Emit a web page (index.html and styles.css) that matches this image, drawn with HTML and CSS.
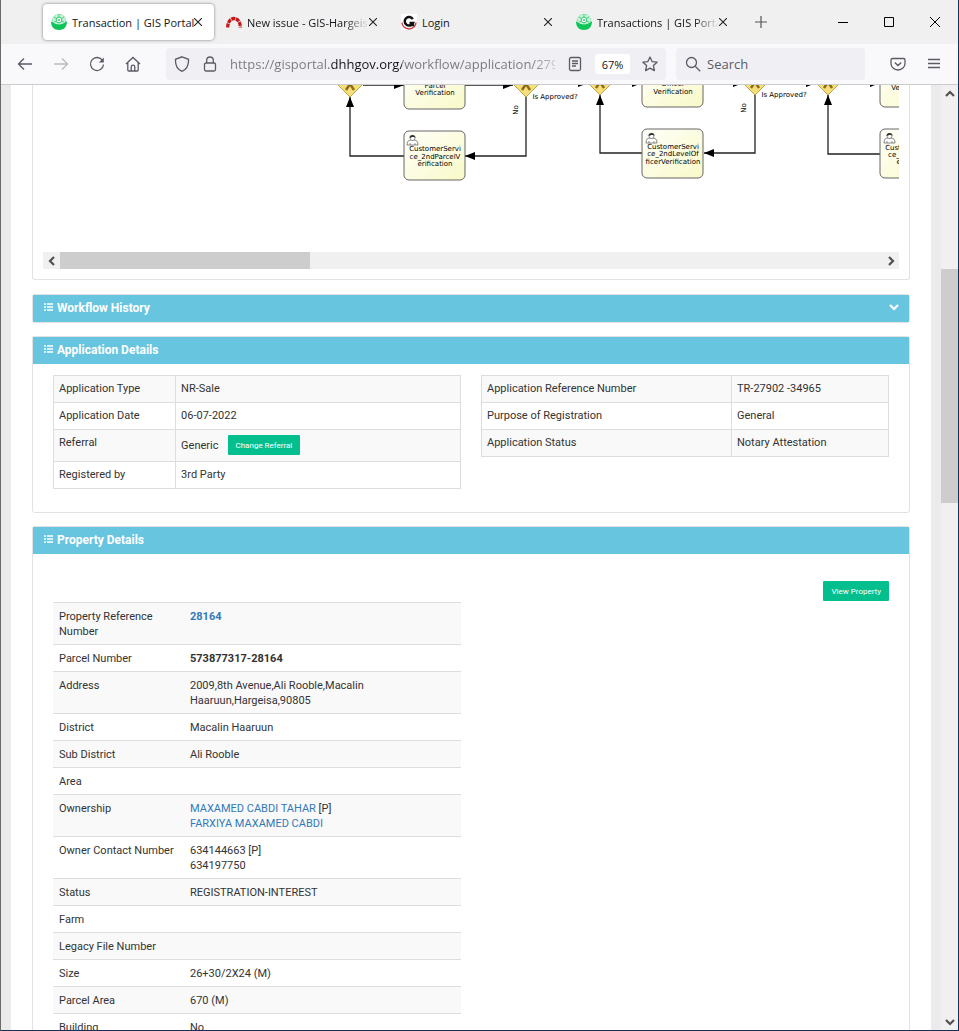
FILE: index.html
```html
<!DOCTYPE html>
<html lang="en">

<head>
    <meta charset="UTF-8">
    <meta name="viewport" content="width=device-width, initial-scale=1.0">
    <title>Transaction | GIS Portal</title>
    <link rel="stylesheet" href="styles.css">
</head>

<body>
    <svg class="defs" width="0" height="0" aria-hidden="true">
        <symbol id="logo" viewBox="0 0 16 16">
            <circle cx="8" cy="7" r="6.800" fill="#c4f0d5" stroke="#7fdfa5" stroke-dasharray="2 1" />
            <path d="M0 7.500c2 0 3 3 8 3s6-3 8-3c0 5-3 8.500-8 8.500S0 12.500 0 7.500z" fill="#0fc458" />
            <path d="M3 3l3 2M13 3l-3 2M8 0v3M3 8l3-1M13 8l-3-1" stroke="#4fd383" />
            <circle cx="8" cy="6" r="2.800" fill="#fff" stroke="#2ecc71" />
            <circle cx="8" cy="6" r="1" fill="#2ecc71" />
        </symbol>
        <symbol id="x" viewBox="0 0 8 8">
            <path d="M0 0l8 8M8 0L0 8" fill="none" stroke="#222" stroke-width="1.100" />
        </symbol>
        <symbol id="list" viewBox="0 0 9 8">
            <path d="M0 1h2M0 4h2M0 7h2M3 1h6M3 4h6M3 7h6" stroke="#fff" stroke-width="1.500" />
        </symbol>
        <symbol id="chevron" viewBox="0 0 10 10">
            <path d="M1 3l4 4 4-4" fill="none" stroke="currentColor" stroke-width="2.200" />
        </symbol>
    </svg>

    <div class="tabs" role="tablist">
        <div class="tab active" role="tab" aria-selected="true">
            <svg class="favicon"><use href="#logo" /></svg>
            <span class="tab-title">Transaction | GIS Portal</span>
            <button class="close" aria-label="Close tab"><svg><use href="#x" /></svg></button>
        </div>
        <div class="tab" role="tab">
            <svg class="favicon" viewBox="0 0 16 16">
                <path d="M1.700 13.500C1.700 1.500 14.300 1.500 14.300 13.500" fill="none" stroke="#c61a1a" stroke-width="3.300" stroke-dasharray="4 0.700" />
            </svg>
            <span class="tab-title fade">New issue - GIS-Hargeisa</span>
            <button class="close" aria-label="Close tab"><svg><use href="#x" /></svg></button>
        </div>
        <div class="tab" role="tab">
            <svg class="favicon" viewBox="0 0 16 16">
                <rect width="16" height="16" fill="#fff" />
                <path d="M1 8.500a7 6.500 0 0 0 14 0" fill="none" stroke="#d8343a" stroke-width="1.300" />
                <path d="M11.800 5.200A4.300 4.300 0 1 0 12 9H8.500M12 7.800v4.500" fill="none" stroke="#111" stroke-width="2.500" />
            </svg>
            <span class="tab-title">Login</span>
            <button class="close" aria-label="Close tab"><svg><use href="#x" /></svg></button>
        </div>
        <div class="tab" role="tab">
            <svg class="favicon"><use href="#logo" /></svg>
            <span class="tab-title fade">Transactions | GIS Portal</span>
            <button class="close" aria-label="Close tab"><svg><use href="#x" /></svg></button>
        </div>
        <button class="new-tab" aria-label="New tab">
            <svg viewBox="0 0 12 12"><path d="M6 0v12M0 6h12" stroke="#555" stroke-width="1.200" /></svg>
        </button>
        <div class="window-controls">
            <button aria-label="Minimize"><svg viewBox="0 0 10 10"><path d="M0 5.500h10" stroke="#000" /></svg></button>
            <button aria-label="Maximize"><svg viewBox="0 0 10 10"><path d="M.5.5h9v9h-9z" fill="none" stroke="#000" /></svg></button>
            <button aria-label="Close"><svg viewBox="0 0 10 10"><path d="M0 0l10 10M10 0L0 10" stroke="#000" /></svg></button>
        </div>
    </div>

    <div class="toolbar">
        <div class="nav-buttons">
            <button aria-label="Back"><svg viewBox="0 0 16 16"><path d="M15 8H1.500M7 2.500L1.500 8 7 13.500" /></svg></button>
            <button aria-label="Forward" disabled><svg viewBox="0 0 16 16"><path d="M1 8h13.500M9 2.500L14.500 8 9 13.500" /></svg></button>
            <button aria-label="Reload"><svg viewBox="0 0 16 16"><path d="M13.500 4.500A6.500 6.500 0 1 0 14.500 8.500" /><path d="M14.800 1.500v5h-5z" fill="#5b5b66" stroke="none" /></svg></button>
            <button aria-label="Home"><svg viewBox="0 0 16 16"><path d="M1 8l7-6.500L15 8M2.800 6.500V14q0 1 1 1h8.400q1 0 1-1V6.500M6.200 15v-4q0-1.800 1.800-1.800t1.800 1.800v4" /></svg></button>
        </div>
        <div class="url-bar">
            <svg viewBox="0 0 16 16"><path d="M8 .8l6.500 2.500C14.800 9 12.500 13.500 8 15.300 3.500 13.500 1.200 9 1.500 3.300z" /></svg>
            <svg viewBox="0 0 16 16"><rect x="2.500" y="7" width="11" height="8" rx="1.500" /><path d="M4.700 7V4.300a3.300 3.300 0 0 1 6.600 0V7" /></svg>
            <input class="url" type="text" aria-label="Address" value="https://gisportal.dhhgov.org/workflow/application/279">
            <svg viewBox="0 0 16 16"><rect x="2.500" y="1.500" width="11" height="13" rx="1.500" /><path d="M5 5h6M5 7.500h6M5 10h4" /></svg>
            <button class="zoom">67%</button>
            <svg viewBox="0 0 16 16"><path d="M8 1l2.100 4.600 5 .6-3.700 3.400 1 5L8 12.100l-4.400 2.500 1-5L.9 6.200l5-.6z" stroke-linejoin="round" /></svg>
        </div>
        <div class="search-bar">
            <svg viewBox="0 0 16 16"><circle cx="6.500" cy="6.500" r="5" /><path d="M10.200 10.200l5 5" /></svg>
            <input type="search" aria-label="Search" placeholder="Search">
        </div>
        <div class="menu-buttons">
            <button aria-label="Save to Pocket"><svg viewBox="0 0 16 16"><path d="M2.500 2.500h11q1.500 0 1.500 1.500v3.500a7 6.500 0 0 1-14 0V4q0-1.500 1.500-1.500zM4.800 6.500L8 9.500l3.200-3" /></svg></button>
            <button aria-label="Menu"><svg viewBox="0 0 16 16"><path d="M2 3.500h12M2 7.500h12M2 11.500h12" /></svg></button>
        </div>
    </div>

    <div class="viewport">
        <main class="page">
            <section class="panel diagram-panel">
                <div class="diagram">
                    <svg width="856" height="167" viewBox="43 85 856 167">
                        <defs>
                            <linearGradient id="task-fill" x1="0" y1="0" x2="1" y2="1">
                                <stop offset="0" stop-color="#fffffb" />
                                <stop offset="1" stop-color="#f9f9c8" />
                            </linearGradient>
                            <marker id="arrow" viewBox="0 0 10 8" refX="10" refY="4" markerWidth="10" markerHeight="8" markerUnits="userSpaceOnUse" orient="auto">
                                <path d="M0 0l10 4-10 4z" />
                            </marker>
                            <g id="gateway">
                                <path d="M0-13L13 0 0 13-13 0z" fill="#f6df79" stroke="#b9a44c" />
                                <path d="M-4 6L0 0l4 6" fill="none" stroke="#8a6d1c" stroke-width="2.500" />
                            </g>
                            <g id="user">
                                <path d="M0 11c0-3 1-5 4-5h3c3 0 4 2 4 5z" fill="#fff" stroke="#555" stroke-width=".7" />
                                <path d="M3 11V9M8 11V9" stroke="#555" stroke-width=".6" />
                                <circle cx="5.500" cy="4" r="2.500" fill="#fff" stroke="#555" stroke-width=".6" />
                                <path d="M2.500 4C2 0 9 0 8.500 4 7 2 4 3.500 2.500 4z" fill="#333" />
                            </g>
                        </defs>

                        <g class="flow">
                            <path d="M363 85H404" />
                            <path d="M465 85H513" />
                            <path d="M539 83H588" />
                            <path d="M526 97V156H465" />
                            <path d="M404 156H350V97" />
                            <path d="M612 83H642" />
                            <path d="M704 83H743" />
                            <path d="M768 83H816" />
                            <path d="M755 95V153H704" />
                            <path d="M642 153H600V95" />
                            <path d="M841 83H880" />
                            <path d="M880 154H828V95" />
                        </g>

                        <g class="task">
                            <rect x="404" y="60" width="61" height="49" rx="5" />
                            <rect x="404" y="131" width="61" height="49" rx="5" />
                            <rect x="642" y="58" width="61" height="49" rx="5" />
                            <rect x="642" y="129" width="61" height="49" rx="5" />
                            <rect x="880" y="58" width="61" height="49" rx="5" />
                            <rect x="880" y="129" width="61" height="49" rx="5" />
                        </g>

                        <use href="#gateway" x="350" y="84" />
                        <use href="#gateway" x="526" y="84" />
                        <use href="#gateway" x="600" y="82" />
                        <use href="#gateway" x="755" y="82" />
                        <use href="#gateway" x="828" y="82" />
                        <use href="#user" x="407" y="134" />
                        <use href="#user" x="646" y="132" />
                        <use href="#user" x="884" y="132" />

                        <g class="label">
                            <text x="435" y="88">Parcel</text>
                            <text x="435" y="95">Verification</text>
                            <text x="435" y="151">CustomerServi</text>
                            <text x="435" y="159">ce_2ndParcelV</text>
                            <text x="435" y="166">erification</text>
                            <text x="673" y="86">Officer</text>
                            <text x="673" y="94">Verification</text>
                            <text x="673" y="149">CustomerServi</text>
                            <text x="673" y="156">ce_2ndLevelOf</text>
                            <text x="673" y="164">ficerVerification</text>
                            <text x="911" y="90">Verification</text>
                            <text x="911" y="150">CustomerServi</text>
                            <text x="911" y="157">ce_ChiefOffic</text>
                            <text x="911" y="164">erVerific</text>
                            <text x="555" y="99">Is Approved?</text>
                            <text x="784" y="97">Is Approved?</text>
                            <text transform="translate(518 110) rotate(-90)">No</text>
                            <text transform="translate(746 108) rotate(-90)">No</text>
                        </g>
                    </svg>
                </div>
                <div class="scroll-x">
                    <button class="left" aria-label="Scroll left"><svg><use href="#chevron" /></svg></button>
                    <div class="track"><div class="thumb"></div></div>
                    <button class="right" aria-label="Scroll right"><svg><use href="#chevron" /></svg></button>
                </div>
            </section>

            <section class="panel">
                <h2><svg class="list"><use href="#list" /></svg>Workflow History
                    <button class="toggle" aria-label="Expand"><svg><use href="#chevron" /></svg></button>
                </h2>
            </section>

            <section class="panel">
                <h2><svg class="list"><use href="#list" /></svg>Application Details</h2>
                <div class="panel-body columns">
                    <table class="bordered">
                        <tr><th>Application Type</th><td>NR-Sale</td></tr>
                        <tr><th>Application Date</th><td>06-07-2022</td></tr>
                        <tr><th>Referral</th><td><div class="referral">Generic <button class="btn">Change Referral</button></div></td></tr>
                        <tr><th>Registered by</th><td>3rd Party</td></tr>
                    </table>
                    <table class="bordered wide-label">
                        <tr><th>Application Reference Number</th><td>TR-27902 -34965</td></tr>
                        <tr><th>Purpose of Registration</th><td>General</td></tr>
                        <tr><th>Application Status</th><td>Notary Attestation</td></tr>
                    </table>
                </div>
            </section>

            <section class="panel">
                <h2><svg class="list"><use href="#list" /></svg>Property Details</h2>
                <div class="panel-body">
                    <div class="actions">
                        <button class="btn">View Property</button>
                    </div>
                    <div class="columns">
                        <table class="property">
                            <tr><th>Property Reference Number</th><td><a href="#"><b>28164</b></a></td></tr>
                            <tr><th>Parcel Number</th><td><b>573877317-28164</b></td></tr>
                            <tr><th>Address</th><td>2009,8th Avenue,Ali Rooble,Macalin Haaruun,Hargeisa,90805</td></tr>
                            <tr><th>District</th><td>Macalin Haaruun</td></tr>
                            <tr><th>Sub District</th><td>Ali Rooble</td></tr>
                            <tr><th>Area</th><td></td></tr>
                            <tr><th>Ownership</th><td><a href="#">MAXAMED CABDI TAHAR</a> [P]<br><a href="#">FARXIYA MAXAMED CABDI</a></td></tr>
                            <tr><th>Owner Contact Number</th><td>634144663 [P]<br>634197750</td></tr>
                            <tr><th>Status</th><td>REGISTRATION-INTEREST</td></tr>
                            <tr><th>Farm</th><td></td></tr>
                            <tr><th>Legacy File Number</th><td></td></tr>
                            <tr><th>Size</th><td>26+30/2X24 (M)</td></tr>
                            <tr><th>Parcel Area</th><td>670 (M)</td></tr>
                            <tr><th>Building</th><td>No</td></tr>
                        </table>
                    </div>
                </div>
            </section>
        </main>
        <div class="scroll-y">
            <button class="up" aria-label="Scroll up"><svg><use href="#chevron" /></svg></button>
            <div class="track"><div class="thumb"></div></div>
            <button aria-label="Scroll down"><svg><use href="#chevron" /></svg></button>
        </div>
    </div>
</body>

</html>
```
FILE: styles.css
```css
* {
    box-sizing: border-box;
}

body {
    display: flex;
    flex-direction: column;
    height: 100vh;
    margin: 0;
    overflow: hidden;
    border: 1px solid #15305a;
    border-top: none;
    border-left-color: #6b6b6b;
    color: #333;
    font-family: Roboto, sans-serif;
    font-size: 11px;
    line-height: 15px;
}

button {
    display: flex;
    align-items: center;
    justify-content: center;
    padding: 0;
    border: none;
    background: none;
    color: inherit;
    font: inherit;
}

svg {
    flex: none;
}

.defs {
    position: absolute;
}

/* tab strip */

.tabs {
    display: flex;
    flex: none;
    height: 44px;
    padding: 4px 0 4px 42px;
    background: #f0f0f0;
    color: #15141a;
    font-family: "Open Sans", sans-serif;
    font-size: 11px;
}

.tab {
    display: flex;
    align-items: center;
    flex: 0 1 171px;
    min-width: 0;
    height: 36px;
    margin-right: 4px;
    padding: 0 12px 0 8px;
    border-radius: 4px;
}

.tab.active {
    background: #fff;
    box-shadow: 0 0 3px rgba(0, 0, 0, 0.5);
}

.favicon {
    width: 16px;
    height: 16px;
    margin-right: 5px;
}

.tab-title {
    flex: 1;
    min-width: 0;
    white-space: nowrap;
}

.fade {
    overflow: hidden;
    -webkit-mask-image: linear-gradient(to right, #000 80%, transparent);
    mask-image: linear-gradient(to right, #000 80%, transparent);
}

.close svg {
    width: 8px;
    height: 8px;
}

.window-controls svg {
    width: 10px;
    height: 10px;
}

.new-tab {
    width: 36px;
}

.new-tab svg {
    width: 12px;
    height: 12px;
}

.window-controls {
    display: flex;
    margin-left: auto;
}

.window-controls button {
    width: 46px;
}

/* toolbar */

.toolbar {
    display: flex;
    align-items: center;
    flex: none;
    height: 41px;
    padding: 0 6px;
    border-bottom: 1px solid #ccc;
    background: #f9f9fb;
    font-family: "Open Sans", sans-serif;
    font-size: 13px;
}

.toolbar svg {
    width: 16px;
    height: 16px;
    fill: none;
    stroke: #5b5b66;
    stroke-width: 1.3;
}

.nav-buttons,
.menu-buttons {
    display: flex;
}

.nav-buttons button,
.menu-buttons button {
    width: 36px;
    height: 32px;
}

button:disabled {
    opacity: 0.4;
}

.url-bar,
.search-bar {
    display: flex;
    align-items: center;
    min-width: 0;
    height: 32px;
    border-radius: 4px;
    background: #f0f0f4;
}

.url-bar {
    flex: 1 1 500px;
    gap: 12px;
    margin: 0 10px 0 15px;
    padding: 0 8px;
}

.search-bar {
    flex: 0 1 189px;
    gap: 6px;
    margin-right: 15px;
    padding: 0 9px;
}

.toolbar input {
    flex: 1;
    min-width: 0;
    height: 24px;
    padding: 0;
    border: none;
    background: none;
    font: inherit;
}

.toolbar input::placeholder {
    color: #5b5b66;
    opacity: 1;
}

.toolbar .url {
    background: linear-gradient(to right, #77777f 101px, #15141a 101px, #15141a 172px, #77777f 172px, #77777f 300px, #e0e0e6 332px);
    background-clip: text;
    -webkit-background-clip: text;
    color: transparent;
}

.zoom {
    width: 35px;
    height: 20px;
    border-radius: 3px;
    background: #fff;
    color: #15141a;
    font-size: 11px;
}

/* page */

.viewport {
    display: flex;
    flex: 1;
    min-height: 0;
    background: #ebebeb;
}

.page {
    flex: 1;
    min-width: 0;
    margin: 0 10px;
    padding: 0 21px;
    overflow: hidden;
    background: #fff;
}

.panel {
    margin-bottom: 13px;
    border: 1px solid #e2e2e4;
    border-radius: 3px;
}

.panel h2 {
    display: flex;
    align-items: center;
    height: 27px;
    margin: 0;
    padding: 0 10px;
    background: #67c5df;
    color: #fff;
    font-size: 12px;
    font-weight: 700;
}

.list {
    width: 9px;
    height: 8px;
    margin: 0 4px 4px 1px;
}

.toggle {
    margin: 0 0 4px auto;
}

.toggle svg {
    width: 10px;
    height: 10px;
}

.panel-body {
    padding: 11px 20px 23px;
}

.columns {
    display: grid;
    grid-template-columns: 1fr 1fr;
    align-items: start;
    gap: 20px;
}

.diagram-panel {
    margin-bottom: 14px;
    padding: 0 10px 10px;
    border-top: none;
    border-radius: 0 0 3px 3px;
}

.diagram {
    height: 167px;
    overflow: hidden;
}

.flow path {
    fill: none;
    stroke: #222;
    stroke-width: 1.3;
    marker-end: url(#arrow);
}

.task rect {
    fill: url(#task-fill);
    stroke: #666;
}

.label {
    fill: #000;
    font-family: "DejaVu Sans", sans-serif;
    font-size: 7px;
    text-anchor: middle;
}

/* tables */

table {
    width: 100%;
    border-collapse: collapse;
    table-layout: fixed;
}

th,
td {
    padding: 6px 6px 5px;
    border-top: 1px solid #ddd;
    font-weight: 400;
    text-align: left;
    vertical-align: top;
}

th {
    width: 30%;
}

tr:nth-child(odd) {
    background: #f9f9f9;
}

.bordered th,
.bordered td {
    padding: 5px 5px 6px;
    border: 1px solid #ddd;
}

.wide-label th {
    width: 250px;
}

.property th {
    width: 131px;
}

a {
    color: #337ab7;
    text-decoration: none;
}

.referral {
    display: flex;
    align-items: center;
    gap: 9px;
}

.btn {
    height: 20px;
    padding: 0 8px;
    border-radius: 1px;
    background: #03bf8d;
    color: #fff;
    font-size: 8px;
}

.actions {
    display: flex;
    justify-content: flex-end;
    padding: 16px 0 1px;
}

/* scrollbars */

.scroll-x,
.scroll-y {
    display: flex;
    background: #f0f0f0;
    color: #505050;
}

.scroll-y {
    flex-direction: column;
    width: 17px;
}

.scroll-x button,
.scroll-y button {
    width: 17px;
    height: 17px;
}

.scroll-x svg,
.scroll-y svg {
    width: 10px;
    height: 10px;
}

.track {
    flex: 1;
}

.thumb {
    background: #cdcdcd;
}

.scroll-x .thumb {
    width: 250px;
    height: 100%;
}

.scroll-y .track {
    padding-top: 167px;
}

.scroll-y .thumb {
    height: 234px;
}

.left svg {
    transform: rotate(90deg);
}

.right svg {
    transform: rotate(-90deg);
}

.up svg {
    transform: rotate(180deg);
}
```
